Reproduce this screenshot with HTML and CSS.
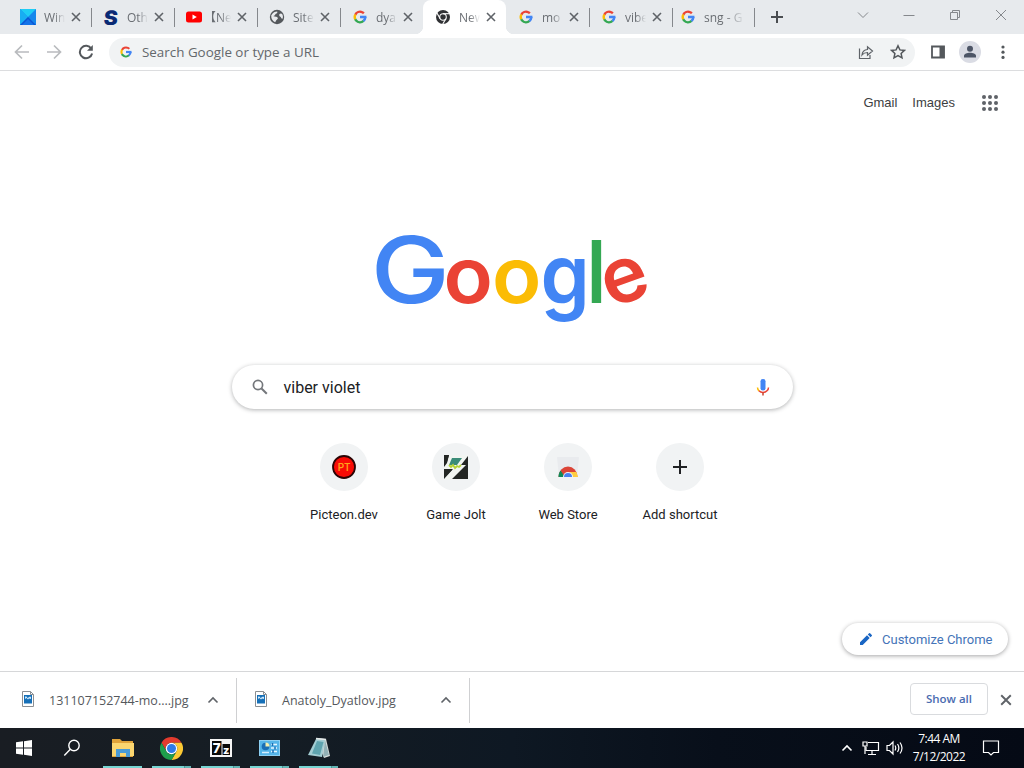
FILE: index.html
```html
<!DOCTYPE html>
<html lang="en">
<head>
	<meta charset="UTF-8">
	<title>New Tab</title>
	<link rel="stylesheet" href="styles.css">
</head>
<body>
	<svg class="defs" width="0" height="0">
		<symbol id="g" viewBox="0 0 24 24">
			<g fill="none" stroke-width="4.2">
				<circle cx="12" cy="12" r="9" pathLength="360" stroke="#ea4335" stroke-dasharray="110 250" transform="rotate(205 12 12)"/>
				<circle cx="12" cy="12" r="9" pathLength="360" stroke="#fbbc05" stroke-dasharray="55 305" transform="rotate(152 12 12)"/>
				<circle cx="12" cy="12" r="9" pathLength="360" stroke="#34a853" stroke-dasharray="105 255" transform="rotate(48 12 12)"/>
				<circle cx="12" cy="12" r="9" pathLength="360" stroke="#4285f4" stroke-dasharray="50 310" transform="rotate(-1 12 12)"/>
			</g>
			<rect x="12" y="9.8" width="11" height="4.4" fill="#4285f4"/>
		</symbol>
		<symbol id="x" viewBox="0 0 10 10">
			<path d="M1 1l8 8M9 1l-8 8" fill="none" stroke="#5f6368" stroke-width="1.6"/>
		</symbol>
		<symbol id="up" viewBox="0 0 12 8">
			<path d="M1.5 6.5L6 2l4.500 4.500" fill="none" stroke="currentColor" stroke-width="1.600"/>
		</symbol>
		<symbol id="jpg" viewBox="0 0 12 16">
			<path d="M.5.5h8l3 3v12H.5z" fill="#fff" stroke="#8b8f93"/>
			<path d="M8.500.5v3h3" fill="none" stroke="#8b8f93"/>
			<path d="M2 4h8v8.500H2z" fill="#1670b8"/>
			<path d="M3 8V5.500h1.500l1 1.500L8 5.500l1 .5v2L7 7.500l-1 1L4.500 7z" fill="#cfe8fa"/>
		</symbol>
	</svg>

	<div class="tabs">
		<div class="tab">
			<svg class="fav" viewBox="0 0 16 16"><path d="M0 0h16v16H0z" fill="#1687ec"/><path d="M0 0h16L8 8z" fill="#1fcdf5"/><path d="M0 0l8 8-8 8z" fill="#18aef2"/><path d="M0 16l8-8 8 8z" fill="#0b55d4"/><path d="M2 16l6-6 6 6z" fill="#1473e8"/></svg>
			<span class="title">Win</span>
			<svg class="close"><use href="#x"/></svg>
		</div>
		<div class="tab">
			<svg class="fav" viewBox="0 0 16 16"><text x="1.500" y="15.500" class="s" textLength="14" lengthAdjust="spacingAndGlyphs" transform="skewX(-5)">S</text></svg>
			<span class="title">Oth</span>
			<svg class="close"><use href="#x"/></svg>
		</div>
		<div class="tab">
			<svg class="fav" viewBox="0 0 16 16"><rect y="2.500" width="16" height="11" rx="2.500" fill="#f00"/><path d="M6.500 5.500v5L10.800 8z" fill="#fff"/></svg>
			<span class="title cjk">【Ne</span>
			<svg class="close"><use href="#x"/></svg>
		</div>
		<div class="tab">
			<svg class="fav" viewBox="0 0 16 16"><circle cx="8" cy="8" r="7.200" fill="#54585c"/><path d="M2.200 6.500C4 3.500 6 2.600 8.200 2.600c.5 1.600-.4 2-1.700 2.400C6 6.600 5 6.500 4.500 7.300c1.600.4 3.700.2 4.300 1.600.5 1.200-1.400 1.500-1.700 2.700-.3.900-.6 1.500-1 1.600C4 12.300 2 10 2.200 6.500z" fill="#e8eaed"/><path d="M10.500 5c1-.9 2-.8 2.800.2.800 1.500.8 3 .2 4.500-1.200.2-1.500-1-1.700-1.600-1.300-.4-2.100-1.900-1.300-3.100z" fill="#e8eaed"/></svg>
			<span class="title">Site</span>
			<svg class="close"><use href="#x"/></svg>
		</div>
		<div class="tab nosep">
			<svg class="fav g"><use href="#g"/></svg>
			<span class="title">dya</span>
			<svg class="close"><use href="#x"/></svg>
		</div>
		<div class="tab active">
			<svg class="fav" viewBox="0 0 16 16"><circle cx="8" cy="8" r="7" fill="#303134"/><g fill="none" stroke="#fff" stroke-width="1.100"><circle cx="8" cy="8" r="3.300"/><path d="M8 4.700h7"/><path d="M8 4.700h7" transform="rotate(120 8 8)"/><path d="M8 4.700h7" transform="rotate(240 8 8)"/></g></svg>
			<span class="title">New</span>
			<svg class="close"><use href="#x"/></svg>
		</div>
		<div class="tab">
			<svg class="fav g"><use href="#g"/></svg>
			<span class="title">mo</span>
			<svg class="close"><use href="#x"/></svg>
		</div>
		<div class="tab">
			<svg class="fav g"><use href="#g"/></svg>
			<span class="title">vibe</span>
			<svg class="close"><use href="#x"/></svg>
		</div>
		<div class="tab last">
			<svg class="fav g"><use href="#g"/></svg>
			<span class="title long">sng - G</span>
		</div>
		<svg class="plus" viewBox="0 0 12 12"><path d="M6 0v12M0 6h12" stroke="#4a4d51" stroke-width="2"/></svg>
		<div class="winbtns">
			<svg viewBox="0 0 12 12"><path d="M1 3.500l5 5 5-5"/></svg>
			<svg viewBox="0 0 12 12"><path d="M.5 6.500h11"/></svg>
			<svg viewBox="0 0 12 12"><path d="M1.500 3.500h7v7h-7zM3.500 3.500v-2h7v7h-2"/></svg>
			<svg viewBox="0 0 12 12"><path d="M1 1l10 10M11 1L1 11"/></svg>
		</div>
	</div>

	<div class="toolbar">
		<svg class="nav off" viewBox="0 0 16 16"><path d="M15 8H2M8 1.500L1.500 8 8 14.500"/></svg>
		<svg class="nav off" viewBox="0 0 16 16"><path d="M1 8h13M8 1.500L14.500 8 8 14.500"/></svg>
		<svg class="nav" viewBox="0 0 16 16"><path d="M13.300 4.700A6.200 6.200 0 1 0 14.100 9.500"/><path d="M14.800 1v5.800H9z" fill="#54585c" stroke="none"/></svg>
		<div class="omnibox">
			<svg class="og"><use href="#g"/></svg>
			<span>Search Google or type a URL</span>
			<svg class="share" viewBox="0 0 16 16"><path d="M1.500 4.500v10h10.500V11M4 11c.3-3.500 2.300-5.300 5.500-5.500V2.700l5 4.300-5 4.300V8.500C7 8.500 5.400 9.200 4 11z"/></svg>
			<svg class="star" viewBox="0 0 16 16"><path d="M8 1.800l1.900 4.100 4.500.5-3.300 3.100.9 4.400L8 11.700l-4 2.200.9-4.400L1.600 6.400l4.500-.5z"/></svg>
		</div>
		<svg class="panel" viewBox="0 0 16 16"><path d="M2 2.500h12v11H2z" fill="#fff" stroke="#54585c" stroke-width="1.800"/><path d="M9.500 2h4.800v12H9.500z" fill="#54585c"/></svg>
		<svg class="avatar" viewBox="0 0 22 22"><circle cx="11" cy="11" r="11" fill="#dadce4"/><circle cx="11" cy="7.700" r="3" fill="#4d5566"/><path d="M5 16.500v-1.800c0-2 3.200-3 6-3s6 1 6 3v1.800z" fill="#4d5566"/></svg>
		<svg class="dots" viewBox="0 0 4 16"><g fill="#54585c"><circle cx="2" cy="3" r="1.600"/><circle cx="2" cy="8.200" r="1.600"/><circle cx="2" cy="13.400" r="1.600"/></g></svg>
	</div>

	<div class="page">
		<div class="links">
			<span>Gmail</span>
			<span>Images</span>
			<svg viewBox="0 0 16 16"><g fill="#5f6368"><circle cx="2" cy="2" r="2"/><circle cx="8" cy="2" r="2"/><circle cx="14" cy="2" r="2"/><circle cx="2" cy="8" r="2"/><circle cx="8" cy="8" r="2"/><circle cx="14" cy="8" r="2"/><circle cx="2" cy="14" r="2"/><circle cx="8" cy="14" r="2"/><circle cx="14" cy="14" r="2"/></g></svg>
		</div>
		<svg class="logo" viewBox="0 0 272 92">
			<text class="cap" transform="translate(-5.300 68.200) scale(1.150 1)" fill="#4285f4">G</text>
			<text transform="translate(67.600 68) scale(1.040 1)" fill="#ea4335">o</text>
			<text transform="translate(116 68) scale(1.040 1)" fill="#fbbc05">o</text>
			<text transform="translate(164.500 69) scale(1.010 1.060)" fill="#4285f4">g</text>
			<text class="ell" transform="translate(209.500 67.500)" fill="#34a853">l</text>
			<text transform="translate(234.500 73.500) rotate(-20)" fill="#ea4335">e</text>
		</svg>
		<div class="search">
			<svg class="lens" viewBox="0 0 16 16"><circle cx="6" cy="6" r="4.600" fill="none" stroke="#74777b" stroke-width="1.700"/><path d="M9.500 9.500l5.300 5.300" stroke="#74777b" stroke-width="2"/></svg>
			<span>viber violet</span>
			<svg class="mic" viewBox="0 0 14 20"><rect x="4.500" y="2" width="5" height="11.500" rx="2.300" fill="#4285f4"/><g fill="none" stroke-width="1.500"><path d="M1.500 10.500q0 2 1.700 3.500" stroke="#fbbc05"/><path d="M3 13.800c2 2.200 6 2.200 8 0q1.500-1.300 1.500-3.300" stroke="#ea4335"/><path d="M7 15.500v3" stroke="#c8452c"/></g></svg>
		</div>
		<div class="shortcuts">
			<div class="item">
				<div class="circle"><svg viewBox="0 0 24 24"><circle cx="12" cy="12" r="11" fill="#f80b05" stroke="#2a0505" stroke-width="1.800"/><text class="pt" x="12" y="15.700" text-anchor="middle">PT</text></svg></div>
				<span>Picteon.dev</span>
			</div>
			<div class="item">
				<div class="circle"><svg viewBox="0 0 24 24"><path d="M0 0h24v24H0z" fill="#232624"/><path d="M5 0h19v1l-7 9h5L8 24H0l9-10H0v-3l3-4z" fill="#f2f5f2"/><path d="M0 15h8L0 23zM0 0h5L3 8 0 12z" fill="#232624"/><path d="M8 3h10l-5 7H5z" fill="#3b8c78"/><path d="M5 10l2 2 2-2 2 3 2-2 2 1 2-2" fill="none" stroke="#b5d334" stroke-width="1.800"/></svg></div>
				<span>Game Jolt</span>
			</div>
			<div class="item">
				<div class="circle"><svg viewBox="0 0 24 24"><path d="M1 2h22l-2 20H3z" fill="#e9ebee"/><path d="M2.500 22A9.500 10.500 0 0 1 21.500 22z" fill="#db4437"/><path d="M2.500 22c0-3 .6-4.500 2-6.500l4.500 6.500z" fill="#0f8a58"/><path d="M14 17h6.500l1.500 5h-8z" fill="#ffcd40"/><path d="M7 22a5 5 0 0 1 10 0z" fill="#eef2fa"/><path d="M8 22a4 4 0 0 1 8 0z" fill="#4a80f0"/></svg></div>
				<span>Web Store</span>
			</div>
			<div class="item">
				<div class="circle"><svg viewBox="0 0 24 24"><path d="M12 5v14M5 12h14" stroke="#202124" stroke-width="2"/></svg></div>
				<span>Add shortcut</span>
			</div>
		</div>
		<div class="customize">
			<svg viewBox="0 0 14 14"><path d="M1 10.300V13h2.700l7-7L8 3.300zM8.800 2.500l2.700 2.700 1.300-1.300q.5-.5 0-1L11.100 1.200q-.5-.5-1 0z" fill="#1a66c4"/></svg>
			<span>Customize Chrome</span>
		</div>
	</div>

	<div class="downloads">
		<div class="file">
			<svg class="doc"><use href="#jpg"/></svg>
			<span>131107152744-mo....jpg</span>
			<svg class="up"><use href="#up"/></svg>
		</div>
		<div class="file second">
			<svg class="doc"><use href="#jpg"/></svg>
			<span>Anatoly_Dyatlov.jpg</span>
			<svg class="up"><use href="#up"/></svg>
		</div>
		<div class="showall">Show all</div>
		<svg class="dclose"><use href="#x"/></svg>
	</div>

	<div class="taskbar">
		<div class="app"><svg width="16" height="16" viewBox="0 0 16 16"><path d="M0 2.300L7 1.300v6.200H0zM8 1.200L16 0v7.500H8zM0 8.500h7v6.200l-7-1zM8 8.500h8V16l-8-1.200z" fill="#fff"/></svg></div>
		<div class="app"><svg width="18" height="18" viewBox="0 0 18 18"><g fill="none" stroke="#fff" stroke-width="1.400"><circle cx="11" cy="6.500" r="5.200"/><path d="M7.300 10.300L1.300 16.500"/></g></svg></div>
		<div class="app run one"><svg width="22" height="20" viewBox="0 0 22 20"><path d="M0 1h8l2 2h11v16H0z" fill="#e0a33a"/><path d="M0 5h22v13H0z" fill="#fbd670"/><path d="M4 11h14v8h-4v-4H8v4H4z" fill="#4a9bd6"/></svg></div>
		<div class="app run"><svg width="23" height="23" viewBox="0 0 24 24"><path d="M1.600 6A12 12 0 0 1 22.400 6H12a6 6 0 0 0-5.200 9z" fill="#e33b2e"/><path d="M1.600 6A12 12 0 0 1 22.400 6H12a6 6 0 0 0-5.200 9z" fill="#fcc934" transform="rotate(120 12 12)"/><path d="M1.600 6A12 12 0 0 1 22.400 6H12a6 6 0 0 0-5.200 9z" fill="#1e9e4c" transform="rotate(240 12 12)"/><circle cx="12" cy="12" r="6" fill="#fff"/><circle cx="12" cy="12" r="4.700" fill="#2f7be8"/></svg></div>
		<div class="app run"><svg width="22" height="18" viewBox="0 0 22 18"><path d="M0 0h22v18H0z" fill="#f5f5f5"/><path d="M2 2h9.500v14H2zM12.500 5H20v11h-7.500z" fill="#0a0a0a"/><text class="z7" x="2.800" y="14">7</text><text class="z7 small" x="13" y="14.500">z</text></svg></div>
		<div class="app run"><svg width="21" height="16" viewBox="0 0 21 16"><path d="M0 0h21v16H0z" fill="#8ccff2"/><path d="M1 1h19v14H1z" fill="#54b4e8"/><circle cx="6.500" cy="6.500" r="3.800" fill="#1b6fb5"/><path d="M6.500 6.500V2.500a4 4 0 0 1 4 4z" fill="#f4f0b0"/><path d="M12 4.500h6M12 8h6M12 11.500h6" stroke="#e5f6ff" stroke-width="1.500"/><path d="M13.500 3v3M16 6.500v3M14 10v3" stroke="#1b6fb5" stroke-width="1.500"/><path d="M3 12.500h7" stroke="#d6efff" stroke-width="1.500"/></svg></div>
		<div class="app run"><svg width="22" height="22" viewBox="0 0 22 22"><path d="M8 1l10 1 4 17-6 2z" fill="#d8dedc"/><path d="M8 2l9 1-3 17L0 18z" fill="#a3cdd3"/><path d="M9 4l6.500 1-3.500 13-8-1.500z" fill="#5fa4af"/><path d="M8 1.500l10 1" stroke="#e3e8e8" stroke-width="1.500"/><path d="M17 3l4 15-6 2z" fill="#93b1b6"/></svg></div>
		<div class="tray">
			<svg width="12" height="8"><use href="#up"/></svg>
			<svg width="18" height="16" viewBox="0 0 18 16"><g fill="none" stroke="#fff" stroke-width="1.200"><path d="M6 2.500h10.500v8H4V7"/><path d="M1 2h4v4H1zM3 6v8M10 10.500V14M6 14.500h8"/></g></svg>
			<svg width="18" height="16" viewBox="0 0 18 16"><g fill="none" stroke="#fff" stroke-width="1.200"><path d="M1 5.500h2.500L7 2v12l-3.500-3.500H1zM9 5.500q1.500 2.500 0 5M11.500 4q2.700 4 0 8M14 2.500q4 5.500 0 11"/></g></svg>
			<div class="clock"><div>7:44 AM</div><div>7/12/2022</div></div>
			<svg class="note" width="18" height="18" viewBox="0 0 18 18"><path d="M1.500 2h15v11.500h-5L9 16l-2.500-2.500h-5z" fill="none" stroke="#fff" stroke-width="1.200"/></svg>
		</div>
	</div>
</body>
</html>
```
FILE: styles.css
```css
* {
	box-sizing: border-box;
}
body {
	margin: 0;
	width: 1024px;
	height: 768px;
	overflow: hidden;
	display: flex;
	flex-direction: column;
	background: #fff;
	font-family: "Open Sans", "Noto Sans", sans-serif;
	font-size: 13px;
	color: #202124;
}
svg {
	display: block;
	flex: none;
}
.defs {
	position: absolute;
}

/* tab strip */
.tabs {
	height: 34px;
	background: #e7eaed;
	padding-left: 8px;
	display: flex;
	align-items: center;
}
.tab {
	position: relative;
	width: 83px;
	height: 34px;
	padding-left: 12px;
	display: flex;
	align-items: center;
	flex: none;
}
.tab::after {
	content: "";
	width: 1px;
	height: 19px;
	margin-left: auto;
	margin-right: -1px;
	background: #85888c;
}
.tab.nosep::after, .tab.active::after {
	background: none;
}
.tab.last {
	padding-left: 8px;
}
.tab.last::after {
	margin-right: 0;
}
.fav {
	width: 16px;
	height: 16px;
}
.fav.g {
	width: 14px;
	height: 14px;
	margin: 0 1px;
}
.title {
	width: 21px;
	margin-left: 8px;
	overflow: hidden;
	white-space: nowrap;
	font-size: 12px;
	color: #6a6e73;
	-webkit-mask-image: linear-gradient(90deg, #000 50%, transparent);
	mask-image: linear-gradient(90deg, #000 50%, transparent);
}
.title.long {
	width: 41px;
}
.cjk {
	font-family: "Open Sans", "Noto Sans CJK JP", sans-serif;
	text-indent: -6px;
	line-height: 17px;
}
.close {
	width: 10px;
	height: 10px;
	margin-left: 6px;
}
.s {
	font: 900 20px "Inter", sans-serif;
	fill: #0a2a75;
}
.active {
	background: #fff;
	border-radius: 8px 8px 0 0;
}
.active::before {
	content: "";
	position: absolute;
	left: -8px;
	right: -8px;
	bottom: 0;
	height: 8px;
	background: radial-gradient(circle at 0 0, transparent 8px, #fff 8.5px) 0 0 / 8px 8px no-repeat, radial-gradient(circle at 100% 0, transparent 8px, #fff 8.5px) 100% 0 / 8px 8px no-repeat;
}
.plus {
	width: 12px;
	height: 12px;
	margin-left: 16px;
}
.winbtns {
	display: flex;
	gap: 34px;
	margin-left: auto;
	padding: 0 17px 5px 0;
}
.winbtns svg {
	width: 12px;
	height: 12px;
	fill: none;
	stroke: #85888c;
}

/* toolbar */
.toolbar {
	height: 37px;
	border-bottom: 1px solid #dcdddf;
	display: flex;
	align-items: center;
	padding-left: 14px;
}
.nav {
	width: 16px;
	height: 16px;
	margin-right: 16px;
	fill: none;
	stroke: #54585c;
	stroke-width: 2;
}
.nav.off {
	stroke: #b9bbbe;
	stroke-width: 1.7;
}
.omnibox {
	width: 806px;
	height: 29px;
	margin-left: -1px;
	border-radius: 15px;
	background: #f1f3f4;
	display: flex;
	align-items: center;
	padding: 0 9px 0 11px;
	color: #63676b;
	font-size: 13.4px;
}
.og {
	width: 12px;
	height: 12px;
	margin-right: 10px;
}
.share {
	width: 16px;
	height: 16px;
	margin-left: auto;
	fill: none;
	stroke: #5f6368;
	stroke-width: 1.2;
}
.star {
	width: 16px;
	height: 16px;
	margin-left: 16px;
	fill: none;
	stroke: #54585c;
	stroke-width: 1.5;
}
.panel {
	width: 16px;
	height: 16px;
	margin-left: 15px;
}
.avatar {
	width: 22px;
	height: 22px;
	margin-left: 13px;
}
.dots {
	width: 4px;
	height: 16px;
	margin-left: 19.5px;
}

/* new tab page */
.page {
	height: 600px;
	display: flex;
	flex-direction: column;
	align-items: center;
	font-family: Roboto, sans-serif;
}
.links {
	align-self: flex-end;
	height: 64px;
	padding-right: 26px;
	display: flex;
	align-items: center;
	font-family: "Liberation Sans", Arial, sans-serif;
	font-size: 13px;
	color: #3c3e41;
}
.links span {
	margin-right: 15px;
	padding-bottom: 2px;
}
.links svg {
	width: 16px;
	height: 16px;
	margin-left: 12px;
}
.logo {
	width: 272px;
	height: 92px;
	margin-top: 100px;
	overflow: visible;
}
.logo text {
	font-family: "Inter", sans-serif;
	font-size: 78px;
	font-weight: 600;
}
.logo .cap {
	font-size: 92px;
	font-weight: 500;
}
.logo .ell {
	font-size: 87px;
	font-weight: 500;
}
.search {
	width: 561px;
	height: 44px;
	margin-top: 38px;
	border-radius: 22px;
	box-shadow: 0 1px 4px rgba(32, 33, 36, .35);
	display: flex;
	align-items: center;
	padding: 0 23px 0 20px;
	font-size: 16px;
}
.lens {
	width: 16px;
	height: 16px;
	margin-right: 16px;
}
.mic {
	width: 14px;
	height: 20px;
	margin-left: auto;
}
.shortcuts {
	display: flex;
	margin-top: 34px;
}
.item {
	width: 112px;
	display: flex;
	flex-direction: column;
	align-items: center;
	font-size: 13px;
}
.circle {
	width: 48px;
	height: 48px;
	margin-bottom: 16px;
	border-radius: 50%;
	background: #f1f3f4;
	display: flex;
	align-items: center;
	justify-content: center;
}
.circle svg {
	width: 24px;
	height: 24px;
}
.pt {
	font: 500 10px Roboto, sans-serif;
	fill: #ffa31a;
}
.customize {
	align-self: flex-end;
	margin: auto 16px 16px 0;
	width: 166px;
	height: 32px;
	border-radius: 16px;
	box-shadow: 0 1px 4px rgba(32, 33, 36, .4);
	display: flex;
	align-items: center;
	padding-left: 17px;
	color: #4474b8;
}
.customize svg {
	width: 14px;
	height: 14px;
	margin-right: 9px;
}

/* downloads shelf */
.downloads {
	height: 57px;
	border-top: 1px solid #d6d7d9;
	display: flex;
	align-items: center;
	font-size: 12.5px;
	color: #55585c;
}
.file {
	width: 237px;
	height: 45px;
	border-right: 1px solid #cfd0d2;
	display: flex;
	align-items: center;
	padding: 0 17px 0 22px;
}
.file.second {
	width: 233px;
	padding-left: 18px;
}
.doc {
	width: 12px;
	height: 16px;
	margin: 0 15px 2px 0;
}
.up {
	width: 12px;
	height: 8px;
	margin-left: auto;
	color: #5f6368;
}
.showall {
	width: 78px;
	height: 32px;
	margin-left: auto;
	margin-bottom: 2px;
	border: 1px solid #d9dbde;
	border-radius: 4px;
	line-height: 30px;
	text-align: center;
	font-size: 11.5px;
	font-weight: 600;
	color: #4a6cb0;
}
.dclose {
	width: 12px;
	height: 12px;
	margin: 0 12px;
}

/* taskbar */
.taskbar {
	height: 40px;
	display: flex;
	background: linear-gradient(90deg, #191d23 0%, #151d24 25%, #0e1823 50%, #080f1a 70%, #050a15 100%);
	color: #fff;
}
.app {
	width: 48px;
	height: 40px;
	display: flex;
	align-items: center;
	justify-content: center;
}
.run {
	width: 49px;
	padding-left: 4px;
	background: linear-gradient(90deg, transparent 7px, #76d5d2 7px 39px, #4e9496 39px 40px, #62b5b4 40px 46px, transparent 46px) 0 100% / 100% 2px no-repeat;
}
.run.one {
	background-image: linear-gradient(90deg, transparent 7px, #76d5d2 7px 46px, transparent 46px);
}
.z7 {
	font: 800 13.5px "Inter", sans-serif;
	fill: #fff;
}
.z7.small {
	font-size: 11px;
}
.tray {
	margin-left: auto;
	padding-right: 24px;
	display: flex;
	align-items: center;
}
.tray svg {
	margin-right: 6px;
}
.tray > svg:first-child {
	margin-right: 9px;
}
.clock {
	width: 58px;
	margin-right: 1px;
	text-align: center;
	font-size: 12px;
	line-height: 18px;
	letter-spacing: -.5px;
	white-space: nowrap;
}
.tray .note {
	margin: 0 0 0 13px;
}
```
